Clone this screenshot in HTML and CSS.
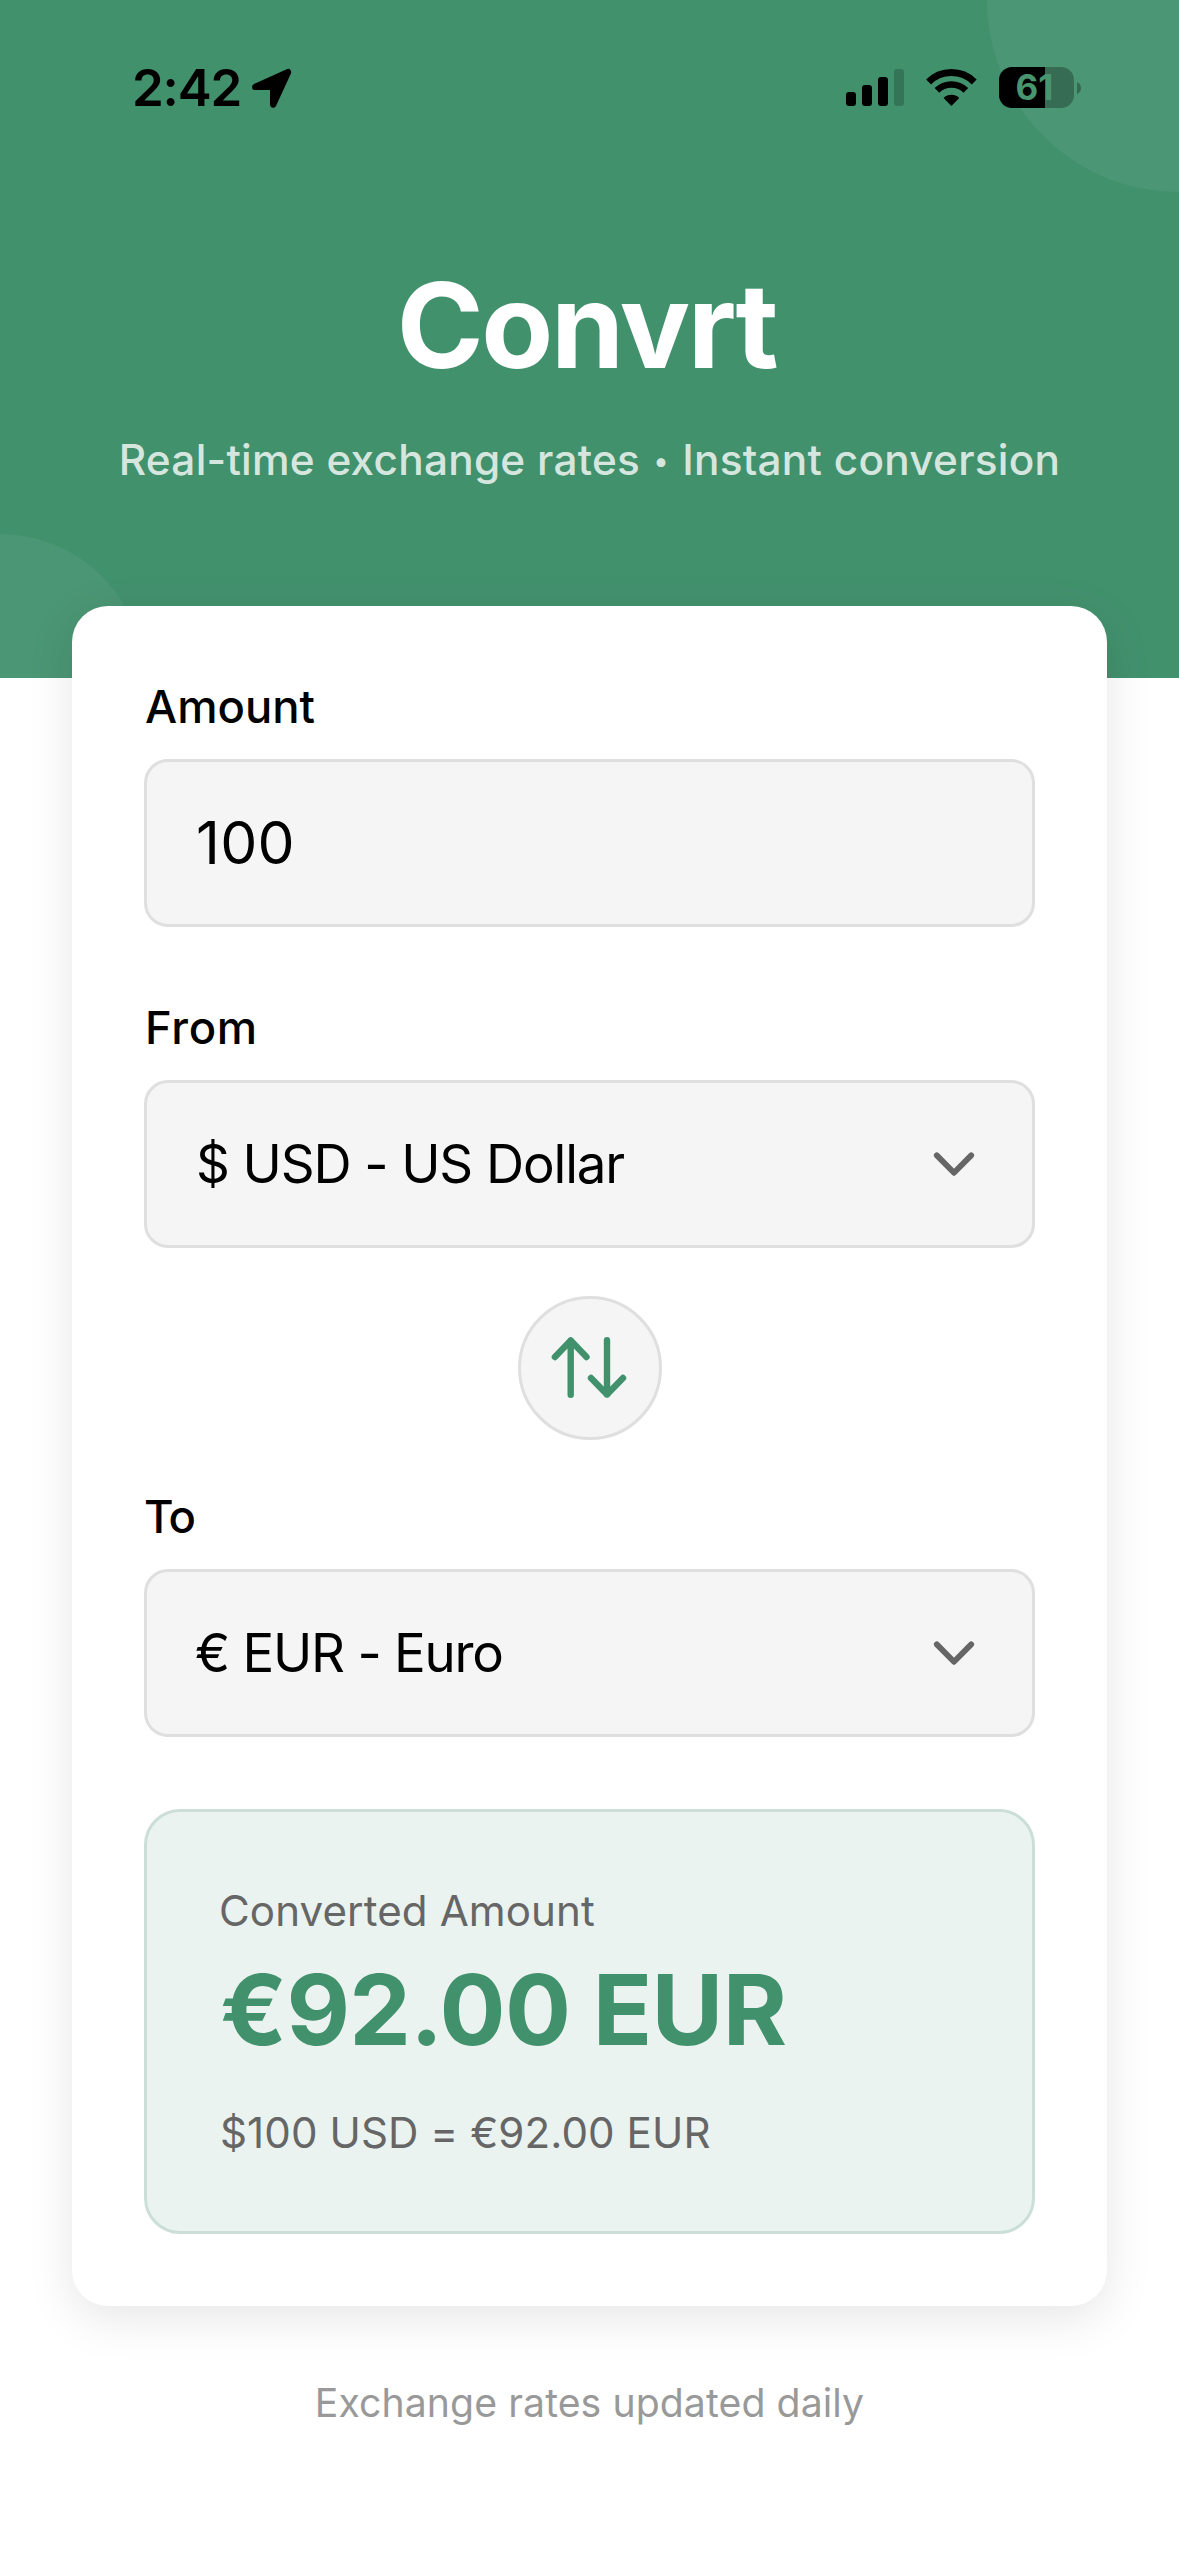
FILE: index.html
```html
<!DOCTYPE html>
<html lang="en">
<head>
  <meta charset="utf-8">
  <title>Convrt</title>
  <link rel="stylesheet" href="styles.css">
</head>
<body>
  <header class="hero">
    <div class="bubble bubble-top"></div>
    <div class="bubble bubble-bottom"></div>
    <div class="status-bar">
      <div class="status-left">
        <span class="clock">2:42</span>
        <svg width="40" height="41" viewBox="0 -1.5 40 41">
          <path d="M3.3 18.4 36 3.6 21.2 36V18.4Z" fill="#000" stroke="#000" stroke-width="6.4" stroke-linejoin="round"/>
        </svg>
      </div>
      <div class="status-right">
        <svg class="signal" width="58" height="37" viewBox="0 0 58 37">
          <rect x="0" y="23" width="10" height="14" rx="3"/>
          <rect x="16" y="16" width="10" height="21" rx="3"/>
          <rect x="32" y="8" width="10" height="29" rx="3"/>
          <rect x="48" y="0" width="10" height="37" rx="3" opacity=".2"/>
        </svg>
        <svg class="wifi" width="52" height="39" viewBox="0 0 52 39">
          <path d="M2.6 14A32.4 32.4 0 0 1 48.2 14" fill="none" stroke="#000" stroke-width="7"/>
          <path d="M10.9 22.4A20.7 20.7 0 0 1 39.9 22.4" fill="none" stroke="#000" stroke-width="6.6"/>
          <path d="M25.4 38 17.6 30A11 11 0 0 1 33.2 30Z"/>
        </svg>
        <div class="battery">
          <div class="battery-body">61</div>
          <svg width="4" height="12" viewBox="0 0 4 12"><path d="M0 0Q4 2 4 6T0 12Z" opacity=".3"/></svg>
        </div>
      </div>
    </div>
    <h1 class="title">Convrt</h1>
    <p class="tagline">Real-time exchange rates <span class="dot">•</span> Instant conversion</p>
  </header>

  <main class="card">
    <section class="field">
      <div class="label label-amount">Amount</div>
      <div class="control control-input">100</div>
    </section>
    <section class="field field-from">
      <div class="label label-from">From</div>
      <div class="control">
        <span>$ USD - US Dollar</span>
        <svg class="chevron" width="48" height="48" viewBox="0 0 48 48"><path d="M6.8 15.4 24 32.8 41.2 15.4"/></svg>
      </div>
    </section>
    <div class="swap">
      <svg width="84" height="84" viewBox="0 0 84 84">
        <path d="M22.7 68.7V14.5M6.9 31 22.7 14.5 38.5 31M59 14.3V68.5M43 52 59 68.5 75 52"/>
      </svg>
    </div>
    <section class="field">
      <div class="label label-to">To</div>
      <div class="control">
        <span class="euro">€ EUR - Euro</span>
        <svg class="chevron" width="48" height="48" viewBox="0 0 48 48"><path d="M6.8 15.4 24 32.8 41.2 15.4"/></svg>
      </div>
    </section>
    <section class="result">
      <div class="result-label">Converted Amount</div>
      <div class="result-value">€92.00 EUR</div>
      <div class="result-detail">$100 USD = €92.00 EUR</div>
    </section>
  </main>

  <footer class="note">Exchange rates updated daily</footer>
</body>
</html>
```
FILE: styles.css
```css
* {
  box-sizing: border-box;
}

body {
  margin: 0;
  width: 1179px;
  height: 2556px;
  overflow: hidden;
  background: #fff;
  color: #000;
  font-family: Inter, "Liberation Sans", sans-serif;
}

svg {
  display: block;
}

.hero {
  position: relative;
  height: 678px;
  overflow: hidden;
  background: #42916d;
  text-align: center;
}

.bubble {
  position: absolute;
  border-radius: 50%;
  background: rgba(255, 255, 255, 0.05);
}

.bubble-top {
  top: -192px;
  right: -192px;
  width: 384px;
  height: 384px;
}

.bubble-bottom {
  left: -144px;
  bottom: -144px;
  width: 288px;
  height: 288px;
}

.status-bar {
  position: relative;
  display: flex;
  align-items: center;
  justify-content: space-between;
  height: 175px;
  padding: 0 98px 0 132px;
}

.status-left {
  display: flex;
  align-items: center;
  gap: 11px;
}

.clock {
  font-size: 51px;
  font-weight: 600;
  line-height: 62px;
  letter-spacing: -1.2px;
}

.status-right {
  display: flex;
  align-items: center;
}

.signal {
  margin-right: 22px;
}

.wifi {
  margin-right: 21px;
}

.battery {
  display: flex;
  align-items: center;
  gap: 3px;
}

.battery-body {
  width: 75px;
  height: 41px;
  padding-right: 4px;
  border-radius: 13px;
  background: linear-gradient(90deg, #000 46px, rgba(0, 0, 0, 0.28) 46px);
  color: #48966f;
  font-size: 35px;
  font-weight: 700;
  line-height: 40px;
}

.title {
  margin: 78px 0 0;
  padding-right: 6px;
  color: #fff;
  font-size: 117.5px;
  font-weight: 700;
  line-height: 144px;
  letter-spacing: -2.4px;
}

.tagline {
  margin: 33px 0 0;
  color: rgba(255, 255, 255, 0.8);
  font-size: 42.3px;
  font-weight: 500;
  line-height: 60px;
  letter-spacing: 0.26px;
}

.dot {
  display: inline-block;
  width: 19px;
  font-size: 28px;
  line-height: 1;
  vertical-align: 4px;
}

.card {
  position: relative;
  margin: -72px 72px 0;
  padding: 72px;
  border-radius: 36px;
  background: #fff;
  box-shadow: 0 12px 48px rgba(0, 0, 0, 0.1);
}

.field-from {
  margin-top: 72px;
}

.label {
  margin-bottom: 24px;
  font-size: 45.4px;
  font-weight: 500;
  line-height: 57px;
}

.label-amount {
  padding-left: 1px;
}

.label-from {
  padding-left: 1px;
  letter-spacing: 0.7px;
}

.label-to {
  letter-spacing: -1.5px;
}

.control {
  display: flex;
  align-items: center;
  justify-content: space-between;
  height: 168px;
  padding: 0 54px 0 49px;
  border: 3px solid #dfdfdf;
  border-radius: 24px;
  background: #f5f5f5;
  font-size: 52.8px;
  letter-spacing: -1.1px;
}

.control-input {
  padding-bottom: 2px;
  font-size: 58.8px;
  letter-spacing: 0.3px;
}

.euro {
  margin-left: -1px;
  letter-spacing: -1.25px;
}

.chevron {
  fill: none;
  stroke: #666;
  stroke-width: 5.8;
  stroke-linecap: round;
  stroke-linejoin: round;
}

.swap {
  display: flex;
  align-items: center;
  justify-content: center;
  width: 144px;
  height: 144px;
  margin: 48px auto;
  border: 3px solid #dfdfdf;
  border-radius: 50%;
  background: #f5f5f5;
  fill: none;
  stroke: #42916d;
  stroke-width: 6.4;
  stroke-linecap: round;
  stroke-linejoin: round;
}

.result {
  margin-top: 72px;
  padding: 72px;
  border: 3px solid #cbdfd8;
  border-radius: 36px;
  background: #eaf3f0;
  color: #666;
  font-size: 42.1px;
}

.result-label {
  margin-bottom: 1px;
  line-height: 53px;
  letter-spacing: 0.1px;
}

.result-value {
  margin-bottom: 25px;
  padding-left: 1px;
  color: #42916d;
  font-size: 98px;
  font-weight: 700;
  line-height: 143px;
  letter-spacing: -0.7px;
}

.result-detail {
  padding-left: 1px;
  line-height: 53px;
  letter-spacing: 0.08px;
}

.note {
  margin-top: 70px;
  color: #999;
  font-size: 39.2px;
  line-height: 54px;
  letter-spacing: 0.08px;
  text-align: center;
}
```
